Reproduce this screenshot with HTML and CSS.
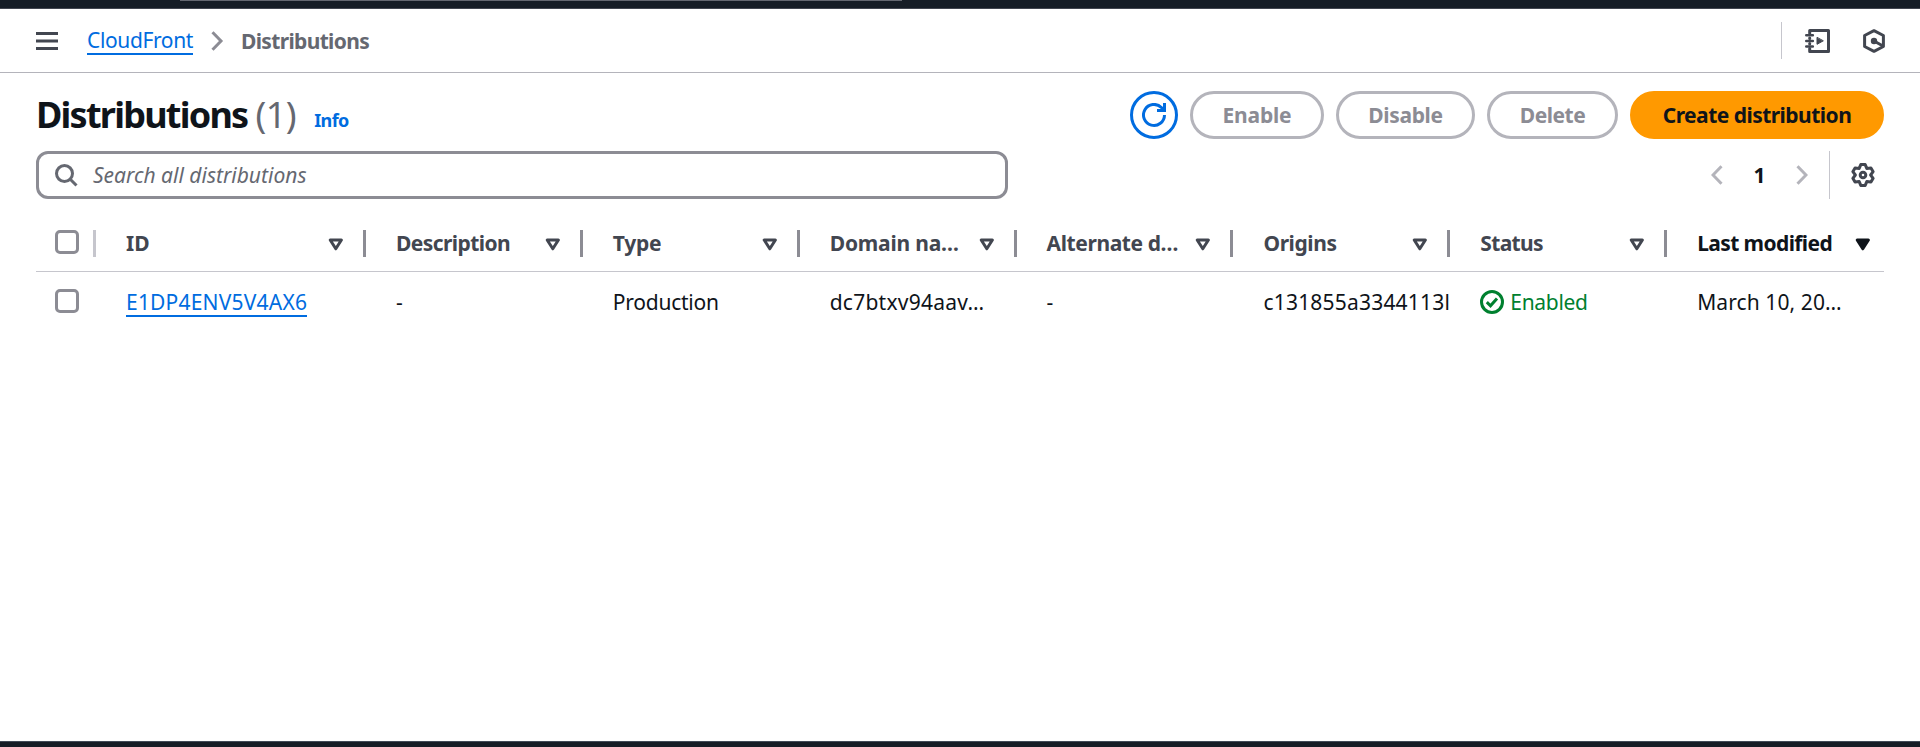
FILE: index.html
```html
<!DOCTYPE html>
<html lang="en">
<head>
<meta charset="utf-8">
<title>CloudFront distributions</title>
<link rel="stylesheet" href="styles.css">
</head>
<body>
<svg class="defs" width="0" height="0" aria-hidden="true">
  <symbol id="sort" viewBox="0 0 16 13"><path d="M2.2 2h11.2L7.8 10.8z" stroke="currentColor" stroke-width="3" stroke-linejoin="round"/></symbol>
</svg>
<div class="topbar"><div class="topbar-search"></div></div>
<nav class="crumbs">
  <svg class="menu" width="22" height="18" viewBox="0 0 22 18"><path d="M0 1.5h22M0 9h22M0 16.5h22" stroke="#424650" stroke-width="3"/></svg>
  <a class="link crumb-link" href="#">CloudFront</a>
  <svg class="crumb-sep" width="13" height="20" viewBox="0 0 13 20"><path d="M1.5 1.2 10 10l-8.500 8.800" fill="none" stroke="#8c8c94" stroke-width="3"/></svg>
  <span class="crumb-now">Distributions</span>
  <div class="tools">
    <svg width="25" height="24" viewBox="0 0 25 24" fill="none" stroke="#424650" stroke-width="3" stroke-linejoin="round" stroke-linecap="round"><path d="M4.700 4.500v-3h18.800v21H4.700v-3M4.700 9v.5M4.700 14.500v.5"/><path d="M1.300 6.200h6.500M1.300 12h6.500M1.300 17.500h6.500" stroke-width="2.600"/><path d="M12 8.700v6.600l6-3.300z" fill="#424650" stroke-width="1"/></svg>
    <svg width="22" height="24" viewBox="0 0 22 24" fill="none" stroke="#424650" stroke-width="3" stroke-linejoin="round"><path d="M11 1.700l9.400 4.800v11L11 22.300l-9.400-4.800v-11z"/><path d="M11 12l9 5"/><circle cx="11" cy="12" r="3.200" fill="#424650" stroke="none"/></svg>
  </div>
</nav>
<main class="page">
  <header class="head">
    <h1 class="title">Distributions</h1><span class="count">(1)</span><a class="info" href="#">Info</a>
    <div class="actions">
      <button class="btn refresh" aria-label="Refresh"><svg width="24" height="24" viewBox="0 0 24 24" fill="none" stroke="currentColor" stroke-width="3"><path d="M22.500 12a10.500 10.500 0 1 1-3.100-7.500l3 3"/><path d="M22.500 0v7.500H15"/></svg></button>
      <button class="btn enable" disabled>Enable</button>
      <button class="btn disable" disabled>Disable</button>
      <button class="btn delete" disabled>Delete</button>
      <button class="btn create">Create distribution</button>
    </div>
  </header>
  <div class="filters">
    <div class="search">
      <svg width="23" height="23" viewBox="0 0 23 23" fill="none" stroke="#656871" stroke-width="3"><circle cx="9.500" cy="9.500" r="8"/><path d="M15 15l6.500 6.500"/></svg>
      <span class="placeholder">Search all distributions</span>
    </div>
    <div class="pager">
      <svg width="12" height="20" viewBox="0 0 12 20" fill="none" stroke="#b4b4bb" stroke-width="3"><path d="M10.500 1.200 2 10l8.500 8.800"/></svg>
      <b class="page-no">1</b>
      <svg width="12" height="20" viewBox="0 0 12 20" fill="none" stroke="#b4b4bb" stroke-width="3"><path d="M1.500 1.200 10 10l-8.500 8.800"/></svg>
    </div>
    <div class="prefs"><svg width="24" height="24" viewBox="0 0 24 24" fill="none" stroke="#424650" stroke-width="3" stroke-linejoin="round"><path d="M9.800 1.600h4.400l1.600 3.800 4.150-.5 2.200 3.800L19.600 12l2.550 3.300-2.200 3.800-4.150-.5-1.600 3.800H9.800l-1.600-3.800-4.150.5-2.200-3.800L4.400 12 1.850 8.700l2.200-3.800 4.150.5z"/><circle cx="12" cy="12" r="2.800"/></svg></div>
  </div>
  <section class="table">
    <div class="row thead">
      <div class="pick"><i class="box"></i></div>
      <div class="cell"><span>ID</span><svg class="sort"><use href="#sort"/></svg></div>
      <div class="cell"><span class="t-desc">Description</span><svg class="sort"><use href="#sort"/></svg></div>
      <div class="cell"><span class="t-type">Type</span><svg class="sort"><use href="#sort"/></svg></div>
      <div class="cell"><span class="t-dom">Domain na…</span><svg class="sort"><use href="#sort"/></svg></div>
      <div class="cell"><span class="t-alt">Alternate d…</span><svg class="sort"><use href="#sort"/></svg></div>
      <div class="cell"><span class="t-orig">Origins</span><svg class="sort"><use href="#sort"/></svg></div>
      <div class="cell"><span class="t-stat">Status</span><svg class="sort"><use href="#sort"/></svg></div>
      <div class="cell sorted"><span class="t-last">Last modified</span><svg class="sort"><use href="#sort"/></svg></div>
    </div>
    <div class="row tbody">
      <div class="pick"><i class="box"></i></div>
      <div class="cell"><a class="link id-link" href="#">E1DP4ENV5V4AX6</a></div>
      <div class="cell">-</div>
      <div class="cell t-prod">Production</div>
      <div class="cell t-domain">dc7btxv94aav…</div>
      <div class="cell">-</div>
      <div class="cell t-origin">c131855a3344113l</div>
      <div class="cell enabled"><svg width="24" height="24" viewBox="0 0 24 24" fill="none" stroke="currentColor" stroke-width="3"><circle cx="12" cy="12" r="10.500"/><path d="M6.800 12.200l3.700 3.600 6.500-7.300"/></svg><span>Enabled</span></div>
      <div class="cell t-date">March 10, 20…</div>
    </div>
  </section>
</main>
<footer class="footer"></footer>
</body>
</html>
```
FILE: styles.css
```css
* { box-sizing: border-box; }
body {
  margin: 0; height: 747px; overflow: hidden; display: flex; flex-direction: column;
  background: #fff; color: #0f141a; font: 21px/30px "Noto Sans", "Open Sans", sans-serif;
}
svg { display: block; flex: none; }
.defs { position: absolute; }

.topbar { flex: none; height: 9px; background: #161d26; border-bottom: 1px solid #424650; }
.topbar-search { width: 722px; height: 1px; margin-left: 180px; background: #656871; }

.crumbs { flex: none; display: flex; align-items: center; height: 64px; padding: 0 35px 0 36px; border-bottom: 1px solid #b4b4bb; }
.link { color: #006ce0; text-decoration: none; border-bottom: 2px solid #006ce0; white-space: nowrap; }
.crumb-link { margin-left: 29px; height: 29px; line-height: 29px; letter-spacing: -.37px; }
.crumb-sep { margin-left: 18px; }
.crumb-now { margin-left: 17px; font-weight: 700; color: #656871; letter-spacing: -.66px; }
.tools { display: flex; align-items: center; gap: 33px; height: 37px; margin-left: auto; padding-left: 23px; border-left: 1px solid #c6c6cd; }

.page { flex: 1; padding: 18px 36px 0; }
.head { display: flex; align-items: center; height: 48px; }
.title { margin: 0; font-size: 36px; line-height: 48px; font-weight: 700; letter-spacing: -1.75px; }
.count { margin-left: 8px; font-size: 36px; line-height: 48px; color: #656871; letter-spacing: -.5px; }
.info { margin: 9px 0 0 18px; font-size: 18px; font-weight: 700; color: #006ce0; text-decoration: none; letter-spacing: -.6px; }
.actions { display: flex; gap: 12px; margin-left: auto; }
.btn {
  display: flex; align-items: center; justify-content: center; height: 48px; padding: 0;
  border: 3px solid #b4b4bb; border-radius: 30px; background: #fff; color: #8c8c94;
  font: 700 21px/30px "Noto Sans", "Open Sans", sans-serif; white-space: nowrap;
}
.refresh { width: 48px; border-color: #006ce0; color: #006ce0; }
.enable { width: 134px; letter-spacing: -.2px; }
.disable { width: 139px; letter-spacing: -.35px; }
.delete { width: 131px; letter-spacing: -.5px; }
.create { width: 254px; border-color: #f90; background: #f90; color: #0f141a; letter-spacing: -.53px; }

.filters { display: flex; height: 48px; margin-top: 12px; }
.search { display: flex; align-items: center; width: 972px; border: 3px solid #8c8c94; border-radius: 12px; padding-left: 16px; }
.placeholder { margin-left: 15px; font-style: italic; color: #656871; }
.pager { display: flex; align-items: center; margin-left: auto; }
.page-no { width: 73px; text-align: center; font-weight: 700; }
.prefs { display: flex; align-items: center; width: 55px; margin-left: 21px; padding-left: 21px; border-left: 1px solid #c6c6cd; }

.table { margin-top: 18px; }
.row { display: grid; grid-template-columns: 60px 270px repeat(7, 1fr); }
.thead { height: 55px; border-bottom: 1px solid #c6c6cd; font-weight: 700; color: #424650; }
.pick, .cell { display: flex; align-items: center; min-width: 0; }
.pick { padding-left: 19px; }
.box { width: 24px; height: 24px; border: 3px solid #8c8c94; border-radius: 5px; }
.cell { padding-left: 30px; white-space: nowrap; }
.thead .pick, .thead .cell { height: 27px; margin-top: 13px; border-right: 3px solid #8c8c94; }
.thead .pick { border-color: #c6c6cd; padding-bottom: 3px; }
.thead .sorted { border-color: transparent; color: #0f141a; }
.thead .cell span { padding-bottom: 2px; }
.sort { width: 16px; height: 13px; fill: none; }
.thead .cell .sort { margin: 2px 19px 0 auto; }
.thead .sorted .sort { margin-right: 10px; fill: currentColor; }
.t-desc { letter-spacing: -.58px; }
.t-type { letter-spacing: -.3px; }
.t-dom { letter-spacing: -.2px; }
.t-alt { letter-spacing: -.4px; }
.t-orig { letter-spacing: -.4px; }
.t-stat { letter-spacing: -.65px; }
.t-last { letter-spacing: -.6px; }

.tbody { height: 58px; }
.tbody .cell { padding-top: 1px; }
.id-link { height: 30px; line-height: 30px; letter-spacing: .2px; }
.t-prod { letter-spacing: -.25px; }
.t-domain { letter-spacing: .25px; }
.t-origin { letter-spacing: .2px; overflow: hidden; }
.t-date { letter-spacing: .1px; }
.enabled { color: #00802f; letter-spacing: -.3px; gap: 6px; }

.footer { flex: none; height: 6px; background: #161d26; border-top: 1px solid #424b58; }
```
